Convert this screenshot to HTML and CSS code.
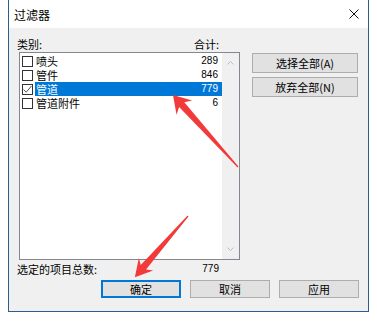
FILE: index.html
```html
<!DOCTYPE html>
<html lang="zh">
<head>
  <meta charset="UTF-8">
  <title>过滤器</title>
  <link rel="stylesheet" href="styles.css">
</head>
<body>
  <div class="dialog">
    <div class="titlebar">
      <span class="title">过滤器</span>
      <svg class="close" width="10" height="10" viewBox="0 0 10 10">
        <path d="M0.5 0.5 L9.5 9.5 M9.5 0.5 L0.5 9.5" stroke="#111" stroke-width="1" fill="none"/>
      </svg>
    </div>

    <div class="content">
      <div class="top">
        <div class="left">
          <div class="labels"><span>类别:</span><span>合计:</span></div>
          <div class="listbox">
            <ul class="items">
              <li class="item"><span class="check"></span><span class="row"><span>喷头</span><span class="num">289</span></span></li>
              <li class="item"><span class="check"></span><span class="row"><span>管件</span><span class="num">846</span></span></li>
              <li class="item selected"><span class="check checked"><svg width="9" height="9" viewBox="0 0 9 9"><path d="M0.5 4.5 L3.2 7.2 L8.5 1" stroke="#555" stroke-width="1" fill="none"/></svg></span><span class="row"><span>管道</span><span class="num">779</span></span></li>
              <li class="item"><span class="check"></span><span class="row"><span>管道附件</span><span class="num">6</span></span></li>
            </ul>
            <div class="scrollbar">
              <svg width="7" height="4" viewBox="0 0 7 4"><path d="M0.5 3.5 L3.5 0.5 L6.5 3.5" stroke="#bdbdbd" fill="none"/></svg>
              <svg width="7" height="4" viewBox="0 0 7 4"><path d="M0.5 0.5 L3.5 3.5 L6.5 0.5" stroke="#bdbdbd" fill="none"/></svg>
            </div>
          </div>
          <div class="summary"><span>选定的项目总数:</span><span class="num">779</span></div>
        </div>
        <div class="side">
          <button class="btn wide">选择全部(A)</button>
          <button class="btn wide">放弃全部(N)</button>
        </div>
      </div>

      <div class="actions">
        <button class="btn default">确定</button>
        <button class="btn">取消</button>
        <button class="btn">应用</button>
      </div>
    </div>
  </div>

  <!-- red annotation arrows drawn over the screenshot -->
  <svg class="arrows" width="377" height="322" viewBox="0 0 377 322">
    <polygon transform="translate(238 167) rotate(-132.1)" points="0,-0.6 84,-3.5 80,-10.5 97,0 80,10.5 84,3.5 0,0.6" fill="#f23a3a"/>
    <polygon transform="translate(188 216) rotate(131)" points="0,-0.6 68,-3.5 64,-9.5 81,0 64,9.5 68,3.5 0,0.6" fill="#f23a3a"/>
  </svg>
</body>
</html>
```

FILE: styles.css
```css
html, body { margin: 0; padding: 0; }
body {
  width: 377px; height: 322px; overflow: hidden; position: relative;
  background: #fff; color: #000;
  font-family: "Noto Sans CJK SC", "Noto Sans", sans-serif; font-size: 11px;
}

.dialog {
  margin-left: 8px; width: 361px; height: 312px; box-sizing: border-box;
  border: 1px solid #2b5c92; border-top: 0;
  background: #f0f0f0;
  display: flex; flex-direction: column;
}

.titlebar {
  height: 28px; background: #fff;
  display: flex; align-items: center; justify-content: space-between;
  padding: 0 9px 0 5px;
}
.title { font-size: 12px; }

.content { flex: 1; padding: 8px 9px 0 8px; }
.top { display: flex; gap: 12px; }
.left { width: 223px; }

.labels, .summary {
  display: flex; justify-content: space-between;
  height: 16px; line-height: 16px; padding-right: 21px;
}
.summary { margin-top: 1px; }

.num { font-family: "Liberation Sans", Arial, sans-serif; font-size: 10px; }

.listbox {
  margin-left: 2px; height: 208px; box-sizing: border-box;
  border: 1px solid #828790; background: #fff;
  display: flex;
}
.items { list-style: none; margin: 0; padding: 1px 0 0; flex: 1; }
.item { display: flex; align-items: center; height: 14px; }
.check {
  width: 11px; height: 11px; box-sizing: border-box;
  border: 1px solid #333; background: #fff;
  margin: 0 2px;
  display: flex; align-items: center; justify-content: center;
}
.row {
  flex: 1; display: flex; justify-content: space-between;
  height: 14px; line-height: 14px; padding: 0 4px 0 1px;
}
.item.selected .row { background: #0078d7; color: #fff; }

.scrollbar {
  width: 17px; background: #f0f0f0;
  display: flex; flex-direction: column; justify-content: space-between; align-items: center;
  padding: 8px 0;
}

.side { display: flex; flex-direction: column; gap: 4px; padding-top: 17px; }

.btn {
  font-family: inherit; font-size: 11px; color: #000;
  background: #e1e1e1; border: 1px solid #adadad;
  padding: 0; width: 80px; height: 18px; line-height: 16px;
}
.btn.wide { width: 106px; height: 20px; line-height: 18px; }
.btn.default { border-color: #0078d7; box-shadow: inset 0 0 0 1px #0078d7; }

.actions { display: flex; justify-content: flex-end; gap: 9px; margin-top: 3px; }

.arrows { position: absolute; top: 0; left: 0; pointer-events: none; }
```
